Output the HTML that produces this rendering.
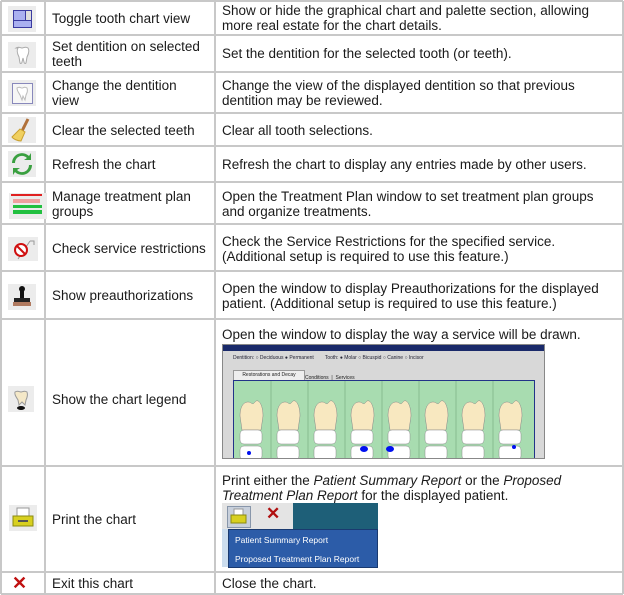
<!DOCTYPE html>
<html><head><meta charset="utf-8"><style>
body{margin:0;width:624px;height:595px;background:#fff;position:relative;overflow:hidden;font-family:"Liberation Sans",sans-serif;color:#1a1a1a;font-size:13.5px;line-height:15px}
.h{position:absolute;left:1px;width:622px;height:2px;background:#c8c8c8}
.v{position:absolute;top:1px;height:593px;width:2px;background:#c8c8c8}
.t{position:absolute;white-space:nowrap}
.ic{position:absolute;left:8px;width:28px;height:26px;background:#ececec}
</style></head><body>
<div class="h" style="top:0"></div><div class="h" style="top:34px"></div><div class="h" style="top:71px"></div><div class="h" style="top:112px"></div><div class="h" style="top:145px"></div><div class="h" style="top:181px"></div><div class="h" style="top:223px"></div><div class="h" style="top:270px"></div><div class="h" style="top:318px"></div><div class="h" style="top:465px"></div><div class="h" style="top:571px"></div><div class="h" style="top:593px"></div>
<div class="v" style="left:0"></div><div class="v" style="left:44px"></div><div class="v" style="left:214px"></div><div class="v" style="left:622px"></div>

<div class="t" style="left:52px;top:11px">Toggle tooth chart view</div>
<div class="t" style="left:52px;top:39px">Set dentition on selected<br>teeth</div>
<div class="t" style="left:52px;top:78px">Change the dentition<br>view</div>
<div class="t" style="left:52px;top:123px">Clear the selected teeth</div>
<div class="t" style="left:52px;top:157px">Refresh the chart</div>
<div class="t" style="left:52px;top:189px">Manage treatment plan<br>groups</div>
<div class="t" style="left:52px;top:241px">Check service restrictions</div>
<div class="t" style="left:52px;top:288px">Show preauthorizations</div>
<div class="t" style="left:52px;top:392px">Show the chart legend</div>
<div class="t" style="left:52px;top:512px">Print the chart</div>
<div class="t" style="left:52px;top:576px">Exit this chart</div>

<div class="t" style="left:222px;top:3px">Show or hide the graphical chart and palette section, allowing<br>more real estate for the chart details.</div>
<div class="t" style="left:222px;top:46px">Set the dentition for the selected tooth (or teeth).</div>
<div class="t" style="left:222px;top:78px">Change the view of the displayed dentition so that previous<br>dentition may be reviewed.</div>
<div class="t" style="left:222px;top:123px">Clear all tooth selections.</div>
<div class="t" style="left:222px;top:157px">Refresh the chart to display any entries made by other users.</div>
<div class="t" style="left:222px;top:189px">Open the Treatment Plan window to set treatment plan groups<br>and organize treatments.</div>
<div class="t" style="left:222px;top:234px">Check the Service Restrictions for the specified service.<br>(Additional setup is required to use this feature.)</div>
<div class="t" style="left:222px;top:281px">Open the window to display Preauthorizations for the displayed<br>patient. (Additional setup is required to use this feature.)</div>
<div class="t" style="left:222px;top:327px">Open the window to display the way a service will be drawn.</div>
<div class="t" style="left:222px;top:473px">Print either the <i>Patient Summary Report</i> or the <i>Proposed<br>Treatment Plan Report</i> for the displayed patient.</div>
<div class="t" style="left:222px;top:576px">Close the chart.</div>

<div class="ic" style="top:6px"><div style="position:absolute;left:5px;top:4px;width:17px;height:16px;border:1px solid #3a3aa0;background:#aab0f0"></div><div style="position:absolute;left:6px;top:14px;width:17px;height:1px;background:#3a3aa0"></div><div style="position:absolute;left:17px;top:5px;width:1px;height:9px;background:#3a3aa0"></div><div style="position:absolute;left:18px;top:5px;width:5px;height:9px;background:#ddd"></div></div>
<div class="ic" style="top:42px"><svg width="28" height="26"><path d="M8 6c3-2 4 0 6 0s3-2 6 0c2 3 0 7-1 9l-1 6c-1 1-2 0-2-1l-1-4-1 4c0 1-1 2-2 1l-1-6c-1-2-3-6-1-9z" fill="#fff" stroke="#aaa"/></svg></div>
<div class="ic" style="top:80px"><div style="position:absolute;left:4px;top:3px;width:19px;height:19px;border:1px solid #8888bb;background:#f6f6f6"></div><svg width="28" height="26" style="position:absolute;left:0;top:0"><path d="M9 8c3-2 3 0 5 0s2-2 5 0c1 3 0 5-1 7l-1 5-2-4-1 4-2-5c-1-2-3-4-3-7z" fill="#fff" stroke="#bbb"/></svg></div>
<div class="ic" style="top:117px"><svg width="28" height="26"><path d="M20 2l-6 12" stroke="#b0703a" stroke-width="3"/><path d="M12 12l5 3-4 9c-3 0-8-2-9-4z" fill="#f0d060" stroke="#c9a030"/></svg></div>
<div class="ic" style="top:151px"><svg width="28" height="26"><path d="M7 12a7 7 0 0 1 12-5l-3 2h7V2l-2 3A10 10 0 0 0 4 12z" fill="#3aa040"/><path d="M21 14a7 7 0 0 1-12 5l3-2H5v7l2-3a10 10 0 0 0 17-7z" fill="#3aa040"/></svg></div>
<div class="ic" style="top:193px;left:9px;width:38px"><div style="position:absolute;left:2px;top:1px;width:31px;height:2px;background:#e02020"></div><div style="position:absolute;left:4px;top:6px;width:27px;height:4px;background:#f0a0a0"></div><div style="position:absolute;left:4px;top:12px;width:29px;height:3px;background:#22c040"></div><div style="position:absolute;left:4px;top:17px;width:29px;height:4px;background:#22c040"></div></div>
<div class="ic" style="top:237px;width:30px;height:24px"><svg width="30" height="24"><path d="M22 4h4v4" stroke="#999" fill="none"/><path d="M22 4l-12 18" stroke="#999"/><circle cx="13" cy="13" r="6" fill="#fff" stroke="#d01010" stroke-width="2"/><path d="M9 9l8 8" stroke="#d01010" stroke-width="2"/></svg></div>
<div class="ic" style="top:284px"><svg width="28" height="26"><circle cx="14" cy="5" r="3" fill="#111"/><rect x="12" y="7" width="4" height="8" fill="#111"/><rect x="6" y="14" width="16" height="4" fill="#222"/><rect x="5" y="18" width="18" height="4" fill="#b07a60"/></svg></div>
<div class="ic" style="top:386px;left:8px;width:26px"><svg width="26" height="26"><path d="M7 6c3-2 4 0 6 0s3-2 6 0c1 3 0 6-1 8l-1 5-3-3-3 3-1-5c-1-2-4-5-3-8z" fill="#f4e8c8" stroke="#999"/><ellipse cx="13" cy="22" rx="4" ry="2" fill="#111"/></svg></div>
<div class="ic" style="top:505px;left:9px;width:28px"><svg width="28" height="26"><rect x="8" y="3" width="12" height="9" fill="#fff" stroke="#999"/><rect x="4" y="11" width="20" height="10" fill="#d8d020" stroke="#8a8a10"/><rect x="9" y="15" width="10" height="2" fill="#555"/></svg></div>
<div class="t" style="left:12px;top:574px;color:#c01010;font-weight:bold;font-size:18px;line-height:18px">✕</div>

<div style="position:absolute;left:222px;top:344px;width:321px;height:113px;background:#d8d8d8;border:1px solid #888;overflow:hidden">
<div style="height:6px;background:#1a2a6a"></div>
<div style="position:absolute;left:10px;top:10px;font-size:5px;line-height:6px;color:#223;white-space:nowrap">Dentition: ○ Deciduous ● Permanent &nbsp;&nbsp;&nbsp;&nbsp;&nbsp;&nbsp; Tooth: ● Molar ○ Bicuspid ○ Canine ○ Incisor</div>
<div style="position:absolute;left:10px;top:25px;width:70px;height:9px;background:#eee;border:1px solid #999;font-size:5px;line-height:9px;text-align:center">Restorations and Decay</div>
<div style="position:absolute;left:82px;top:26px;font-size:5px;white-space:nowrap">Conditions &nbsp;| &nbsp;Services</div>
<div style="position:absolute;left:10px;top:35px;width:300px;height:80px;background:#a8dcb0;border:1px solid #223388"></div>
<svg style="position:absolute;left:11px;top:36px" width="300" height="78">
<g fill="#fff" stroke="#888" stroke-width=".5">
<g id="tt"><path d="M6 35c0-10 4-14 8-14s4 4 7 0 8 2 8 14l-2 14H8z" fill="#f8e8c0"/><rect x="6" y="49" width="22" height="14" rx="4"/><rect x="6" y="65" width="22" height="14" rx="4"/></g>
<use href="#tt" x="37"/><use href="#tt" x="74"/><use href="#tt" x="111"/><use href="#tt" x="148"/><use href="#tt" x="185"/><use href="#tt" x="222"/><use href="#tt" x="259"/>
</g>
<g stroke="#6a9a70" stroke-width=".5"><path d="M37 0v78M74 0v78M111 0v78M148 0v78M185 0v78M222 0v78M259 0v78"/></g>
<ellipse cx="130" cy="68" rx="4" ry="3" fill="#0010f0"/><ellipse cx="156" cy="68" rx="4" ry="3" fill="#0010f0"/><circle cx="280" cy="66" r="2" fill="#0010f0"/><circle cx="15" cy="72" r="2" fill="#0010f0"/>
</svg>
</div>

<div style="position:absolute;left:222px;top:503px;width:156px;height:64px;background:#1e5f78">
<div style="position:absolute;left:0;top:0;width:71px;height:26px;background:#e4e4e4"></div>
<div style="position:absolute;left:5px;top:3px;width:22px;height:20px;background:#c8d0dc;border:1px solid #8896aa"></div>
<svg style="position:absolute;left:7px;top:5px" width="20" height="18"><rect x="5" y="1" width="9" height="7" fill="#fff" stroke="#999"/><rect x="2" y="7" width="15" height="8" fill="#d8d020" stroke="#8a8a10"/></svg>
<div style="position:absolute;left:44px;top:3px;color:#b01010;font-weight:bold;font-size:17px">✕</div>
<div style="position:absolute;left:0;top:26px;width:6px;height:38px;background:#cde"></div>
<div style="position:absolute;left:6px;top:26px;width:148px;height:37px;background:#2c5ca8;border:1px solid #1a3a70;color:#fff;font-size:8.5px;line-height:10px;white-space:nowrap">
<div style="position:absolute;left:6px;top:5px">Patient Summary Report</div>
<div style="position:absolute;left:6px;top:24px">Proposed Treatment Plan Report</div></div>
</div>
</body></html>
